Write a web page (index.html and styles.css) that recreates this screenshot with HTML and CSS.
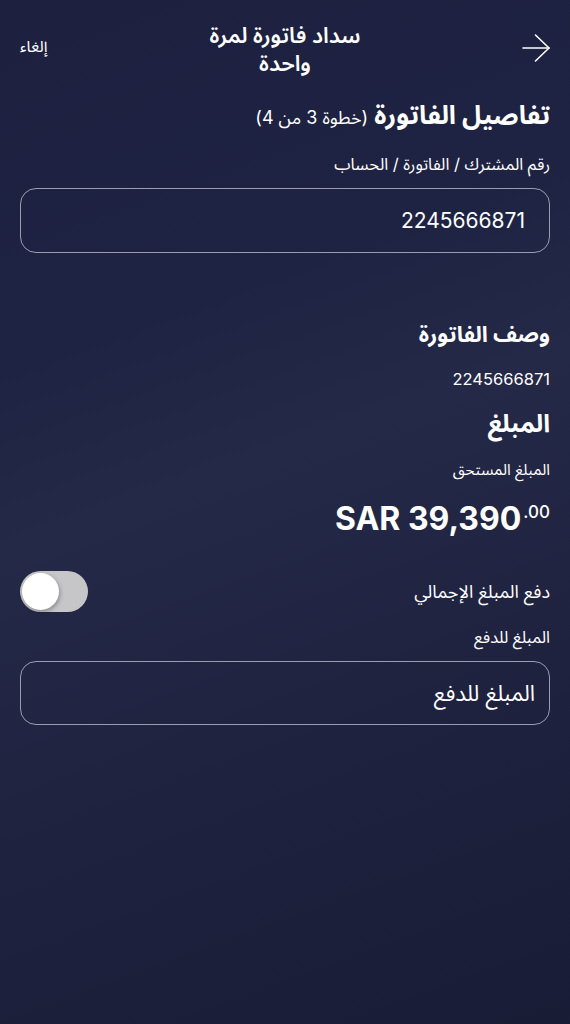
FILE: index.html
```html
<!DOCTYPE html>
<html lang="ar" dir="rtl">
<head>
    <meta charset="UTF-8">
    <meta name="viewport" content="width=device-width, initial-scale=1.0">
    <title>سداد فاتورة لمرة واحدة</title>
    <link rel="stylesheet" href="styles.css">
</head>
<body>
    <div class="screen">
        <div class="header">
            <button class="back" aria-label="رجوع">
                <svg width="28" height="28" viewBox="0 0 28 28" fill="none" stroke="#fff" stroke-width="1.6" stroke-linecap="round" stroke-linejoin="round">
                    <path d="M1 14H27"/>
                    <path d="M13.5 1L27 14L13.5 27"/>
                </svg>
            </button>
            <div class="title">سداد فاتورة لمرة<br>واحدة</div>
            <a class="cancel" href="#">إلغاء</a>
        </div>

        <h1 class="step-title">تفاصيل الفاتورة <span class="step">(خطوة 3 من 4)</span></h1>

        <label class="label" for="account">رقم المشترك / الفاتورة / الحساب</label>
        <input class="field" id="account" type="text" value="2245666871" readonly>

        <h2 class="section">وصف الفاتورة</h2>
        <p class="value">2245666871</p>

        <h2 class="section amount-title">المبلغ</h2>
        <p class="small">المبلغ المستحق</p>
        <div class="amount">SAR 39,390<sup>.00</sup></div>

        <div class="toggle-row">
            <span class="toggle-label">دفع المبلغ الإجمالي</span>
            <div class="toggle"><div class="knob"></div></div>
        </div>

        <label class="small pay-label" for="pay">المبلغ للدفع</label>
        <input class="field pay-field" id="pay" type="text" placeholder="المبلغ للدفع">
    </div>
</body>
</html>
```

FILE: styles.css
```css
html {
    background: #1b1f3b;
}
body {
    margin: 0;
    min-height: 1024px;
    font-family: Inter, "Noto Sans Arabic", "DejaVu Sans", sans-serif;
    color: #fff;
    background: linear-gradient(160deg, #1d203f 0%, #1f2343 30%, #242947 45%, #1e223f 70%, #181c35 100%);
}
.screen {
    padding: 21px 20px 0;
}
.header {
    display: flex;
    align-items: center;
    justify-content: space-between;
    height: 56px;
}
.back {
    background: none;
    border: none;
    padding: 0;
    width: 32px;
    display: flex;
    justify-content: flex-start;
    margin-top: -3px;
}
.title {
    font-size: 22px;
    font-weight: 600;
    line-height: 28px;
    text-align: center;
}
.cancel {
    color: #fff;
    text-decoration: none;
    font-size: 16px;
    width: 32px;
    text-align: left;
    margin-top: -5px;
}
.step-title {
    margin: 22px 0 0;
    font-size: 26px;
    font-weight: 700;
    line-height: 32px;
}
.step {
    font-size: 18px;
    font-weight: 400;
}
.label {
    display: block;
    margin-top: 19px;
    font-size: 16.5px;
    line-height: 22px;
}
.field {
    display: block;
    box-sizing: border-box;
    width: 100%;
    height: 65px;
    margin-top: 13px;
    padding: 0 24px;
    border: 1px solid #9a9db0;
    border-radius: 16px;
    background: transparent;
    color: #fff;
    font-family: inherit;
    font-size: 21px;
    direction: rtl;
    outline: none;
}
.field::placeholder {
    color: #fff;
    opacity: 1;
}
.section {
    margin: 67px 0 0;
    font-size: 22px;
    font-weight: 700;
    line-height: 28px;
}
.value {
    margin: 20px 0 0;
    font-size: 16.5px;
    line-height: 22px;
}
.amount-title {
    margin-top: 18px;
    font-size: 25px;
    line-height: 30px;
}
.small {
    display: block;
    margin: 22px 0 0;
    font-size: 15.5px;
    line-height: 20px;
}
.amount {
    direction: ltr;
    text-align: right;
    margin-top: 12px;
    font-size: 32px;
    font-weight: 700;
    line-height: 40px;
}
.amount sup {
    font-size: 17px;
    font-weight: 500;
    vertical-align: 12px;
    margin-left: 2px;
}
.toggle-row {
    display: flex;
    align-items: center;
    justify-content: space-between;
    margin-top: 32px;
}
.toggle-label {
    font-size: 18px;
}
.toggle {
    width: 68px;
    height: 41px;
    border-radius: 21px;
    background: #c6c6c8;
    display: flex;
    align-items: center;
    justify-content: flex-end;
    padding: 0 2px;
    box-sizing: border-box;
}
.knob {
    width: 37px;
    height: 37px;
    border-radius: 50%;
    background: #fff;
    box-shadow: 1px 2px 4px rgba(0, 0, 0, 0.3);
}
.pay-label {
    margin-top: 15px;
    font-size: 16.5px;
}
.pay-field {
    margin-top: 14px;
    height: 64px;
    padding: 0 14px;
    font-size: 22px;
}
```
